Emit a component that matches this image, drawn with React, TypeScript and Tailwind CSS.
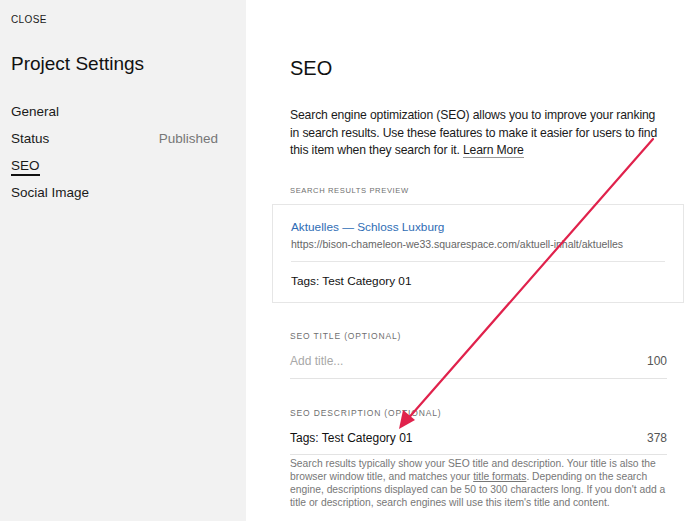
import React from 'react';

const navItems = [
    { label: 'General' },
    { label: 'Status', value: 'Published' },
    { label: 'SEO', active: true },
    { label: 'Social Image' },
];

const Sidebar = () => (
    <aside className="w-[246px] shrink-0 bg-[#f2f2f2] px-[11px]">
        <div className="pt-[12px] text-[10px] font-medium tracking-[0.04em] text-[#1a1a1a]">CLOSE</div>
        <h1 className="mt-[25px] text-[19px] font-medium leading-[24px] text-[#111]">Project Settings</h1>
        <ul className="mt-[23px] flex flex-col">
            {navItems.map((item) => (
                <li key={item.label} className="flex h-[27px] items-center justify-between pr-[17px] text-[13.5px] font-medium text-[#1a1a1a]">
                    <span className={item.active ? 'border-b-2 border-[#111] leading-[16px]' : ''}>{item.label}</span>
                    {item.value && <span className="font-normal text-[#777]">{item.value}</span>}
                </li>
            ))}
        </ul>
    </aside>
);

const FieldLabel = ({ children, small }: { children: React.ReactNode; small?: boolean }) => (
    <div className={small ? 'text-[7.6px] font-medium uppercase tracking-[0.08em] text-[#6f6f6f]' : 'text-[8.5px] font-medium uppercase tracking-[0.1em] text-[#6f6f6f]'}>
        {children}
    </div>
);

const Main = () => (
    <main className="flex-1 bg-white pl-[44px] pr-[33px]">
        <h2 className="pt-[56px] text-[20px] font-medium leading-[24px] text-[#111]">SEO</h2>
        <p className="mt-[27px] w-[372px] text-[12.2px] leading-[17.5px] tracking-[-0.15px] text-[#1a1a1a]">
            Search engine optimization (SEO) allows you to improve your ranking in search results. Use these features to make it easier for users to find this item when they search for it.{' '}
            <span className="border-b border-[#999]">Learn More</span>
        </p>
        <div className="mt-[25px]">
            <FieldLabel small>Search results preview</FieldLabel>
        </div>
        <div className="mt-[8px] -ml-[18px] w-[412px] border border-[#e6e6e6] px-[18px] pt-[13px] pb-[12px]">
            <div className="text-[11.8px] leading-[18px] text-[#2f6db5]">Aktuelles — Schloss Luxburg</div>
            <div className="mt-[1px] text-[10.5px] leading-[14px] text-[#666]">https://bison-chameleon-we33.squarespace.com/aktuell-inhalt/aktuelles</div>
            <div className="mt-[10px] border-t border-[#e6e6e6] pt-[10px] text-[11.8px] leading-[18px] text-[#111]">Tags: Test Category 01</div>
        </div>
        <div className="mt-[27px]">
            <FieldLabel>SEO title (optional)</FieldLabel>
        </div>
        <div className="mt-[6px] flex h-[30px] w-[377px] items-center justify-between border-b border-[#e3e3e3] pb-[4px] text-[12px]">
            <span className="text-[#a8a8a8]">Add title...</span>
            <span className="text-[#555]">100</span>
        </div>
        <div className="mt-[28px]">
            <FieldLabel>SEO description (optional)</FieldLabel>
        </div>
        <div className="mt-[6px] flex h-[30px] w-[377px] items-center justify-between border-b border-[#e3e3e3] pb-[4px] text-[12px]">
            <span className="text-[#111]">Tags: Test Category 01</span>
            <span className="text-[#555]">378</span>
        </div>
        <p className="mt-[2px] w-[390px] text-[10.3px] leading-[13px] text-[#777]">
            Search results typically show your SEO title and description. Your title is also the browser window title, and matches your{' '}
            <span className="underline">title formats</span>. Depending on the search engine, descriptions displayed can be 50 to 300 characters long. If you don't add a title or description, search engines will use this item's title and content.
        </p>
    </main>
);

const Arrow = () => (
    <svg className="pointer-events-none absolute left-0 top-0" width="700" height="521" viewBox="0 0 700 521">
        <line x1="653" y1="139" x2="406" y2="421" stroke="#e0224c" strokeWidth="2.2" strokeLinecap="round" />
        <path d="M399 429 L403 410 L415 420 Z" fill="#e0224c" />
    </svg>
);

export default function App() {
    return (
        <div className="relative flex h-[521px] w-[700px] overflow-hidden" style={{ fontFamily: '"Liberation Sans", Arial, sans-serif' }}>
            <Sidebar />
            <Main />
            <Arrow />
        </div>
    );
}
